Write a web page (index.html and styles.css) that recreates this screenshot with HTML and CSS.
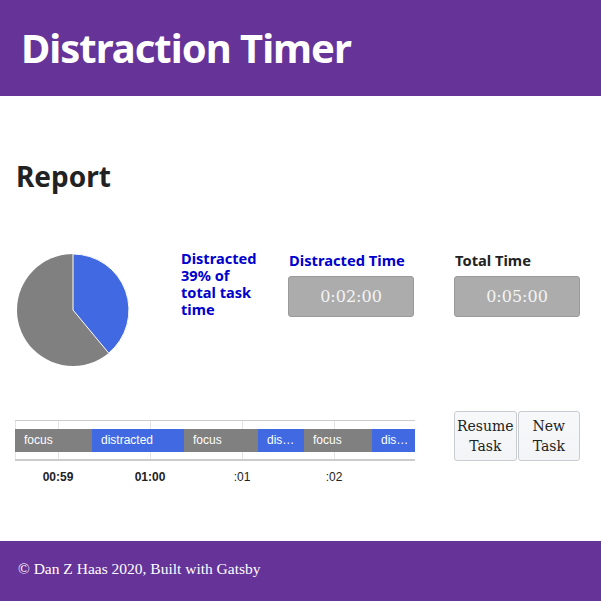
FILE: index.html
```html
<!DOCTYPE html>
<html>
<head>
<meta charset="utf-8">
<link rel="stylesheet" href="styles.css">
</head>
<body>
<header class="site-header">
  <h1 class="site-title">Distraction Timer</h1>
</header>
<main class="main">
  <h2 class="report-title">Report</h2>
  <section class="report-grid">
    <div class="pie-cell">
      <svg class="pie" width="114" height="114" viewBox="0 0 114 114">
        <circle cx="57" cy="57" r="56" fill="#808080"/>
        <path d="M57 57 L57 1 A56 56 0 0 1 92.7 100.1 Z" fill="#4169e1" stroke="#ffffff" stroke-width="1"/>
      </svg>
    </div>
    <p class="pct-text">Distracted 39% of total task time</p>
    <div class="stat">
      <div class="stat-label stat-label-blue">Distracted Time</div>
      <div class="stat-box">0:02:00</div>
    </div>
    <div class="stat">
      <div class="stat-label">Total Time</div>
      <div class="stat-box">0:05:00</div>
    </div>
    <div class="timeline-cell">
      <div class="timeline">
        <div class="gridline" style="left:0px"></div>
        <div class="gridline" style="left:43px"></div>
        <div class="gridline" style="left:135px"></div>
        <div class="gridline" style="left:227px"></div>
        <div class="gridline" style="left:319px"></div>
        <div class="bars">
          <div class="bar bar-focus" style="width:77px">focus</div>
          <div class="bar bar-dis" style="width:92px">distracted</div>
          <div class="bar bar-focus" style="width:74px">focus</div>
          <div class="bar bar-dis" style="width:46px">dis…</div>
          <div class="bar bar-focus" style="width:68px">focus</div>
          <div class="bar bar-dis" style="width:43px">dis…</div>
        </div>
      </div>
      <div class="ticks">
        <span class="tick tick-bold" style="left:43px">00:59</span>
        <span class="tick tick-bold" style="left:135px">01:00</span>
        <span class="tick" style="left:227px">:01</span>
        <span class="tick" style="left:319px">:02</span>
      </div>
    </div>
    <div class="actions">
      <button class="btn">Resume Task</button>
      <button class="btn">New Task</button>
    </div>
  </section>
</main>
<footer class="site-footer">© Dan Z Haas 2020, Built with Gatsby</footer>
</body>
</html>
```
FILE: styles.css
```css
* { box-sizing: border-box; }
html, body { margin: 0; padding: 0; background: #ffffff; }
body { width: 601px; font-family: "Noto Sans", sans-serif; color: #222; }

.site-header {
  background: #663399;
  height: 96px;
  padding: 0 21px;
  display: flex;
  align-items: center;
}
.site-title {
  margin: 0;
  color: #ffffff;
  font-family: "Noto Sans", sans-serif;
  font-weight: 700;
  font-size: 40px;
  line-height: 48px;
  letter-spacing: -1px;
}

.main {
  padding: 60px 15px 0 15px;
  height: 445px;
}
.report-title {
  margin: 0 0 0 1px;
  font-size: 28px;
  line-height: 40px;
  font-weight: 700;
  color: #222;
}

.report-grid {
  margin-top: 54px;
  display: grid;
  grid-template-columns: 166px 107px 166px 126px;
  grid-template-rows: 158px 60px;
}

.pie-cell { padding-top: 3px; padding-left: 1px; }
.pie { display: block; }

.pct-text {
  margin: 0;
  width: 80px;
  color: #0000cd;
  font-weight: 700;
  font-size: 14.6px;
  line-height: 17px;
}

.stat { display: flex; flex-direction: column; gap: 7px; padding-top: 1px; }
.stat-label {
  font-weight: 700;
  font-size: 14.7px;
  line-height: 18px;
  color: #222;
  padding-left: 1px;
}
.stat-label-blue { color: #0000cd; }
.stat-box {
  width: 126px;
  height: 41px;
  background: #acacac;
  border: 1px solid #9a9a9a;
  border-radius: 3px;
  color: #f4f4f4;
  font-family: "DejaVu Serif", serif;
  font-size: 16px;
  display: flex;
  align-items: center;
  justify-content: center;
}

.timeline-cell { grid-column: 1 / 4; padding-top: 12px; }
.timeline {
  position: relative;
  width: 400px;
  height: 41px;
  border-top: 1px solid #cccccc;
  border-bottom: 2px solid #cccccc;
  padding-top: 8px;
}
.gridline {
  position: absolute;
  top: 0;
  bottom: 0;
  width: 1px;
  background: #e3e3e3;
}
.bars { position: relative; display: flex; height: 23px; }
.bar {
  height: 23px;
  color: #ffffff;
  font-family: "Liberation Sans", Arial, sans-serif;
  font-size: 12px;
  line-height: 23px;
  padding-left: 9px;
  white-space: nowrap;
  overflow: hidden;
}
.bar-focus { background: #808080; }
.bar-dis { background: #4169e1; }

.ticks { position: relative; height: 30px; width: 400px; }
.tick {
  position: absolute;
  top: 9px;
  transform: translateX(-50%);
  font-family: "Liberation Sans", Arial, sans-serif;
  font-size: 12px;
  color: #222;
}
.tick-bold { font-weight: 700; }

.actions { display: flex; gap: 1px; align-items: flex-start; padding-top: 3px; }
.btn {
  height: 50px;
  width: 63px;
  padding: 0 2px;
  background: linear-gradient(#f7f8f9, #f2f4f6);
  border: 1px solid #c9ccd0;
  border-radius: 3px;
  font-family: "DejaVu Serif", serif;
  font-size: 14px;
  line-height: 20px;
  color: #222;
}

.site-footer {
  background: #663399;
  height: 60px;
  padding: 0 18px 5px 18px;
  display: flex;
  align-items: center;
  color: #ffffff;
  font-family: "Liberation Serif", serif;
  font-size: 15.5px;
}
```
